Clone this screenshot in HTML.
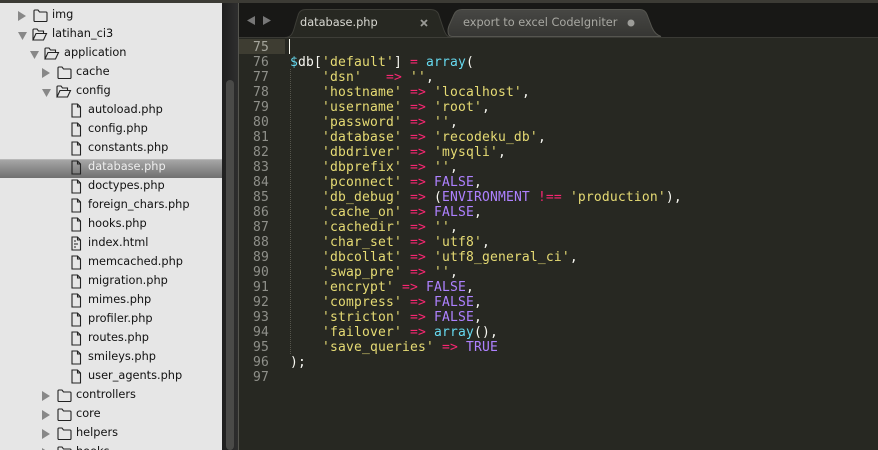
<!DOCTYPE html>
<html><head><meta charset="utf-8"><style>
html,body{margin:0;padding:0;background:#272822}
#r{position:relative;width:878px;height:450px;overflow:hidden;background:#272822}
#r>*{position:absolute}
.t{position:absolute;font:11.33px/19px "DejaVu Sans",sans-serif;color:#111;white-space:pre}
.l{position:absolute;left:239px;width:30px;text-align:right;font:13px/15px "DejaVu Sans Mono",monospace;letter-spacing:.17px;color:#8f908a}
.c{position:absolute;left:290px;font:13px/15px "DejaVu Sans Mono",monospace;letter-spacing:.17px;color:#f8f8f2;white-space:pre}
.s{color:#e6db74}.o{color:#f92672}.k{color:#ae81ff}.b{color:#66d9ef}
svg{position:absolute;overflow:visible}
</style></head><body><div id="r">
<div style="left:0;top:0;width:878px;height:3px;background:#3c3b35"></div>
<div style="left:0;top:3px;width:222px;height:447px;background:#e6e6e6"></div>
<div style="left:222px;top:3px;width:16px;height:447px;background:linear-gradient(90deg,#1f1f1f,#2e2e2e)"></div>
<div style="left:226px;top:80px;width:8px;height:370px;border-radius:4px;background:#4a4a48"></div>
<div style="left:238px;top:3px;width:1px;height:447px;background:#55554f"></div>
<div style="left:239px;top:3px;width:639px;height:34px;background:#181816"></div>
<div style="left:239px;top:37px;width:639px;height:1px;background:#3a3a35"></div>
<div style="left:239px;top:39px;width:46px;height:15px;background:#3e3d32"></div>
<div style="left:289px;top:39px;width:1px;height:15px;background:#f8f8f0"></div>
<div style="left:290px;top:69px;width:0;height:285px;border-left:1px dotted #55554c"></div>

<svg style="left:0;top:0" width="878" height="40">
<defs><linearGradient id="g" x1="0" y1="0" x2="0" y2="1"><stop offset="0" stop-color="#474744"/><stop offset="1" stop-color="#363633"/></linearGradient></defs>
<path d="M255 16v9l-8-4.500z" fill="#777"/>
<path d="M263 16v9l8-4.500z" fill="#777"/>
<path d="M452 36.500q-4 0-4-6q0-3 2-7l4-9q2-5 8-5h178q5 0 7 5l5 13q3 7 9 9z" fill="url(#g)" stroke="#55554f"/>
<path d="M285 37.500c6 0 8-4 10-12l3-10c1-4 4-6 8-6h124c5 0 8 2 9 6l4 12c2 6 4 10 9 10z" fill="#272822" stroke="#3e3e38"/>
<path d="M421 20l6 6m0-6l-6 6" stroke="#9a9a96" stroke-width="1.8"/>
<circle cx="631" cy="23" r="3.500" fill="#9c9c98"/>
</svg>
<div style="left:300px;top:13px;font:11.33px/19px 'DejaVu Sans',sans-serif;color:#d8d8d2">database.php</div>
<div style="left:463px;top:13px;font:11.33px/19px 'DejaVu Sans',sans-serif;color:#a8a8a2">export to excel CodeIgniter</div>

<div style="left:0;top:159px;width:222px;height:19px;background:linear-gradient(#a6a6a6,#6f6f6f);border-top:1px solid #b8b8b8;box-sizing:border-box"></div>

<svg style="left:0;top:0" width="222" height="450" fill="none" stroke="#222" stroke-width="1.1">
<defs>
<path id="fc" d="M.5 4V1.500q0-1 1-1h3l1.500 2h6.500q1 0 1 1V11q0 1-1 1h-11q-1 0-1-1z"/>
<path id="fo" d="M.5 11.500V1.500q0-1 1-1h3l1.500 2h5v2.500M.5 11.500l3-6.500h10.500l-3 6.500z"/>
<path id="ff" d="M.5 .5h5.500l3 3v10h-8.500zM6 .5v3h3"/>
</defs>
<g fill="#888" stroke="none">
<path d="M18 11l8 5-8 5z"/><path d="M18 32h9l-4.500 8z"/><path d="M30 51h9l-4.500 8z"/>
<path d="M42 68l8 5-8 5z"/><path d="M42 89h9l-4.500 8z"/>
<path d="M42 391l8 5-8 5z"/><path d="M42 410l8 5-8 5z"/><path d="M42 429l8 5-8 5z"/><path d="M42 448l8 5-8 5z"/>
</g>
<use href="#fc" x="33.500" y="9.500"/><use href="#fo" x="32.500" y="28.500"/><use href="#fo" x="44.500" y="47.500"/>
<use href="#fc" x="57.500" y="66.500"/><use href="#fo" x="56.500" y="85.500"/>
<use href="#fc" x="57.500" y="389.500"/><use href="#fc" x="57.500" y="408.500"/><use href="#fc" x="57.500" y="427.500"/><use href="#fc" x="57.500" y="446.500"/>
<use href="#ff" x="71.500" y="103.500"/><use href="#ff" x="71.500" y="122.500"/><use href="#ff" x="71.500" y="141.500"/>
<use href="#ff" x="71.500" y="160.500"/><use href="#ff" x="71.500" y="179.500"/><use href="#ff" x="71.500" y="198.500"/>
<use href="#ff" x="71.500" y="217.500"/><use href="#ff" x="71.500" y="236.500"/><use href="#ff" x="71.500" y="255.500"/>
<use href="#ff" x="71.500" y="274.500"/><use href="#ff" x="71.500" y="293.500"/><use href="#ff" x="71.500" y="312.500"/>
<use href="#ff" x="71.500" y="331.500"/><use href="#ff" x="71.500" y="350.500"/><use href="#ff" x="71.500" y="369.500"/>
<path d="M74 241h2m-2 3h4m-4 3h2" stroke-width="1"/>
</svg>

<div class="t" style="left:52px;top:5px">img</div>
<div class="t" style="left:52px;top:24px">latihan_ci3</div>
<div class="t" style="left:64px;top:43px">application</div>
<div class="t" style="left:76px;top:62px">cache</div>
<div class="t" style="left:76px;top:81px">config</div>
<div class="t" style="left:88px;top:100px">autoload.php</div>
<div class="t" style="left:88px;top:119px">config.php</div>
<div class="t" style="left:88px;top:138px">constants.php</div>
<div class="t" style="left:88px;top:157px;color:#eee">database.php</div>
<div class="t" style="left:88px;top:176px">doctypes.php</div>
<div class="t" style="left:88px;top:195px">foreign_chars.php</div>
<div class="t" style="left:88px;top:214px">hooks.php</div>
<div class="t" style="left:88px;top:233px">index.html</div>
<div class="t" style="left:88px;top:252px">memcached.php</div>
<div class="t" style="left:88px;top:271px">migration.php</div>
<div class="t" style="left:88px;top:290px">mimes.php</div>
<div class="t" style="left:88px;top:309px">profiler.php</div>
<div class="t" style="left:88px;top:328px">routes.php</div>
<div class="t" style="left:88px;top:347px">smileys.php</div>
<div class="t" style="left:88px;top:366px">user_agents.php</div>
<div class="t" style="left:76px;top:385px">controllers</div>
<div class="t" style="left:76px;top:404px">core</div>
<div class="t" style="left:76px;top:423px">helpers</div>
<div class="t" style="left:76px;top:442px">hooks</div>

<div class="l" style="top:40px;color:#a5a59c">75</div><div class="l" style="top:55px">76</div><div class="l" style="top:70px">77</div><div class="l" style="top:85px">78</div><div class="l" style="top:100px">79</div><div class="l" style="top:115px">80</div><div class="l" style="top:130px">81</div><div class="l" style="top:145px">82</div><div class="l" style="top:160px">83</div><div class="l" style="top:175px">84</div><div class="l" style="top:190px">85</div><div class="l" style="top:205px">86</div><div class="l" style="top:220px">87</div><div class="l" style="top:235px">88</div><div class="l" style="top:250px">89</div><div class="l" style="top:265px">90</div><div class="l" style="top:280px">91</div><div class="l" style="top:295px">92</div><div class="l" style="top:310px">93</div><div class="l" style="top:325px">94</div><div class="l" style="top:340px">95</div><div class="l" style="top:355px">96</div><div class="l" style="top:370px">97</div>

<div class="c" style="top:55px"><span class="b">$</span>db[<span class="s">'default'</span>] <span class="o">=</span> <span class="b">array</span>(</div>
<div class="c" style="top:70px">    <span class="s">'dsn'</span>   <span class="o">=&gt;</span> <span class="s">''</span>,</div>
<div class="c" style="top:85px">    <span class="s">'hostname'</span> <span class="o">=&gt;</span> <span class="s">'localhost'</span>,</div>
<div class="c" style="top:100px">    <span class="s">'username'</span> <span class="o">=&gt;</span> <span class="s">'root'</span>,</div>
<div class="c" style="top:115px">    <span class="s">'password'</span> <span class="o">=&gt;</span> <span class="s">''</span>,</div>
<div class="c" style="top:130px">    <span class="s">'database'</span> <span class="o">=&gt;</span> <span class="s">'recodeku_db'</span>,</div>
<div class="c" style="top:145px">    <span class="s">'dbdriver'</span> <span class="o">=&gt;</span> <span class="s">'mysqli'</span>,</div>
<div class="c" style="top:160px">    <span class="s">'dbprefix'</span> <span class="o">=&gt;</span> <span class="s">''</span>,</div>
<div class="c" style="top:175px">    <span class="s">'pconnect'</span> <span class="o">=&gt;</span> <span class="k">FALSE</span>,</div>
<div class="c" style="top:190px">    <span class="s">'db_debug'</span> <span class="o">=&gt;</span> (<span class="k">ENVIRONMENT</span> <span class="o">!==</span> <span class="s">'production'</span>),</div>
<div class="c" style="top:205px">    <span class="s">'cache_on'</span> <span class="o">=&gt;</span> <span class="k">FALSE</span>,</div>
<div class="c" style="top:220px">    <span class="s">'cachedir'</span> <span class="o">=&gt;</span> <span class="s">''</span>,</div>
<div class="c" style="top:235px">    <span class="s">'char_set'</span> <span class="o">=&gt;</span> <span class="s">'utf8'</span>,</div>
<div class="c" style="top:250px">    <span class="s">'dbcollat'</span> <span class="o">=&gt;</span> <span class="s">'utf8_general_ci'</span>,</div>
<div class="c" style="top:265px">    <span class="s">'swap_pre'</span> <span class="o">=&gt;</span> <span class="s">''</span>,</div>
<div class="c" style="top:280px">    <span class="s">'encrypt'</span> <span class="o">=&gt;</span> <span class="k">FALSE</span>,</div>
<div class="c" style="top:295px">    <span class="s">'compress'</span> <span class="o">=&gt;</span> <span class="k">FALSE</span>,</div>
<div class="c" style="top:310px">    <span class="s">'stricton'</span> <span class="o">=&gt;</span> <span class="k">FALSE</span>,</div>
<div class="c" style="top:325px">    <span class="s">'failover'</span> <span class="o">=&gt;</span> <span class="b">array</span>(),</div>
<div class="c" style="top:340px">    <span class="s">'save_queries'</span> <span class="o">=&gt;</span> <span class="k">TRUE</span></div>
<div class="c" style="top:355px">);</div>
</div></body></html>
